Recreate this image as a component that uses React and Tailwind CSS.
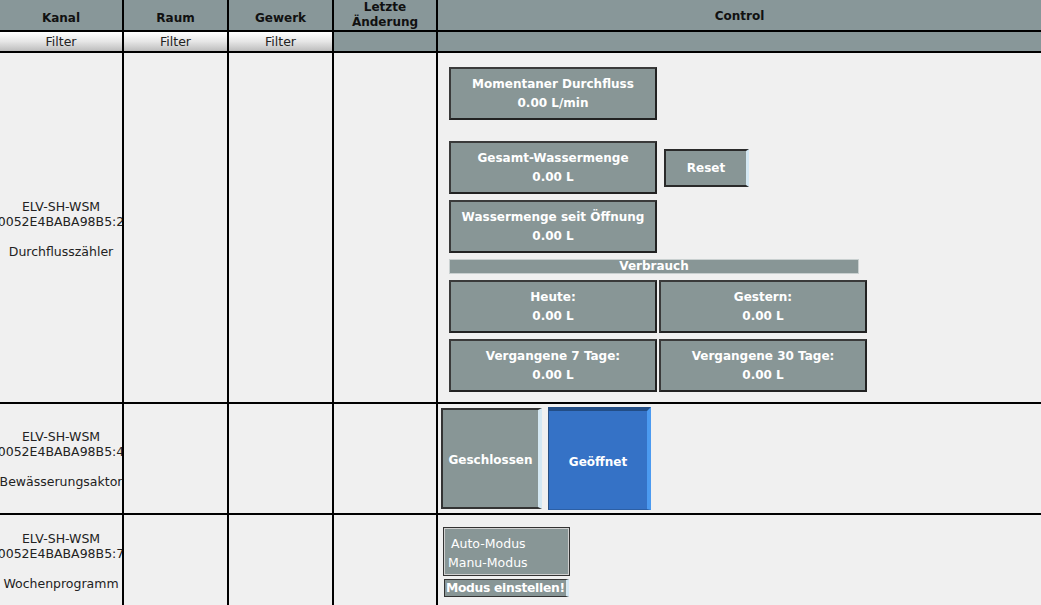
const font = { fontFamily: '"DejaVu Sans", Verdana, sans-serif' };

const Box = ({ title, value, className = "" }) => (
    <div className={`w-[208px] h-[53px] bg-[#889696] border-2 border-t-[#3a3a3a] border-l-[#3a3a3a] border-r-[#222] border-b-[#222] text-white font-bold text-[12px] flex flex-col items-center justify-center leading-[19px] ${className}`}>
        <span>{title}</span>
        <span>{value}</span>
    </div>
);

const Kanal = ({ nr, name }) => (
    <div className="flex flex-col items-center justify-center overflow-hidden text-[12.5px] text-[#222] leading-[15px] whitespace-nowrap">
        <span>ELV-SH-WSM</span>
        <span>0052E4BABA98B5:{nr}</span>
        <span className="mt-[15px]">{name}</span>
    </div>
);

const cell = "border-r-2 border-b-2 border-black";

export default function App() {
    return (
        <div className="w-[1041px] h-[605px] overflow-hidden bg-[#f0f0f0]" style={font}>
            <div className="grid grid-cols-[124px_105px_105px_104px_1fr] grid-rows-[32px_21px_351px_111px_110px]">
                {/* Kopfzeile */}
                {["Kanal", "Raum", "Gewerk"].map((t) => (
                    <div key={t} className={`${cell} bg-[#889799] flex items-end justify-center pb-[3px] font-bold text-[12px] text-[#111]`}>
                        {t}
                    </div>
                ))}
                <div className={`${cell} bg-[#889799] flex flex-col items-center justify-end pb-[0px] font-bold text-[12px] leading-[15px] text-[#111]`}>
                    <span>Letzte</span>
                    <span>Änderung</span>
                </div>
                <div className="border-b-2 border-black bg-[#889799] flex items-center justify-center pt-[1px] font-bold text-[12px] text-[#111]">
                    Control
                </div>

                {/* Filter */}
                {["k", "r", "g"].map((k) => (
                    <div key={k} className={`${cell} bg-gradient-to-b from-white via-[#e6e6e6] to-[#bdbdbd] flex items-center justify-center pt-[1px] text-[12.5px] text-[#222]`}>
                        Filter
                    </div>
                ))}
                <div className={`${cell} bg-[#889799]`} />
                <div className="border-b-2 border-black bg-[#889799]" />

                {/* Durchflusszähler */}
                <div className={cell}><div className="h-full flex items-center justify-center overflow-hidden pt-[2px]"><Kanal nr="2" name="Durchflusszähler" /></div></div>
                <div className={cell} />
                <div className={cell} />
                <div className={cell} />
                <div className="border-b-2 border-black pl-[11px] pt-[14px] flex flex-col">
                    <Box title="Momentaner Durchfluss" value="0.00 L/min" />
                    <div className="flex items-center gap-[7px] mt-[21px]">
                        <Box title="Gesamt-Wassermenge" value="0.00 L" />
                        <button className="w-[85px] h-[38px] bg-[#889696] border-2 border-[#2a2a2a] border-r-[3px] border-r-[#d4e8f3] text-white font-bold text-[12px]">
                            Reset
                        </button>
                    </div>
                    <Box title="Wassermenge seit Öffnung" value="0.00 L" className="mt-[6px]" />
                    <div className="w-[410px] h-[15px] mt-[6px] bg-[#889696] border border-[#c9d0d0] text-white font-bold text-[12px] leading-[13px] text-center">
                        Verbrauch
                    </div>
                    <div className="grid grid-cols-[208px_208px] gap-x-[2px] gap-y-[6px] mt-[6px]">
                        <Box title="Heute:" value="0.00 L" />
                        <Box title="Gestern:" value="0.00 L" />
                        <Box title="Vergangene 7 Tage:" value="0.00 L" />
                        <Box title="Vergangene 30 Tage:" value="0.00 L" />
                    </div>
                </div>

                {/* Bewässerungsaktor */}
                <div className={cell}><div className="h-full flex items-center justify-center overflow-hidden"><Kanal nr="4" name="Bewässerungsaktor" /></div></div>
                <div className={cell} />
                <div className={cell} />
                <div className={cell} />
                <div className="border-b-2 border-black pl-[3px] flex items-center gap-[6px]">
                    <button className="w-[101px] h-[101px] pt-[3px] bg-[#889696] border-2 border-[#333] border-r-[4px] border-r-[#d4e8f3] text-white font-bold text-[12px]">
                        Geschlossen
                    </button>
                    <button className="w-[103px] h-[103px] pt-[3px] bg-[#3572c6] border-l border-l-[#2a4f80] border-t-[4px] border-t-[#224d86] border-r-[4px] border-r-[#4b9af0] border-b border-b-[#2c5fa5] text-white font-bold text-[12px]">
                        Geöffnet
                    </button>
                </div>

                {/* Wochenprogramm */}
                <div className={cell}><div className="h-full flex items-center justify-center overflow-hidden pb-[16px]"><Kanal nr="7" name="Wochenprogramm" /></div></div>
                <div className={cell} />
                <div className={cell} />
                <div className={cell} />
                <div className="pl-[5px] pt-[12px] flex flex-col items-start">
                    <div className="w-[127px] h-[49px] border border-[#333] bg-[#889696]">
                        <div className="h-full border border-[#d0d0d0] flex flex-col justify-center pt-[3px] text-[12.5px] text-white leading-[19px]">
                            <span className="pl-[6px]">Auto-Modus</span>
                            <span className="pl-[3px]">Manu-Modus</span>
                        </div>
                    </div>
                    <button className="w-[125px] h-[18px] mt-[3px] ml-[1px] bg-[#889696] border border-[#333] border-r-[3px] border-r-[#d4e8f3] text-white font-bold text-[12.3px] tracking-[-0.3px] leading-[15px] text-left pl-[1px] whitespace-nowrap overflow-hidden">
                        Modus einstellen!
                    </button>
                </div>
            </div>
        </div>
    );
}
